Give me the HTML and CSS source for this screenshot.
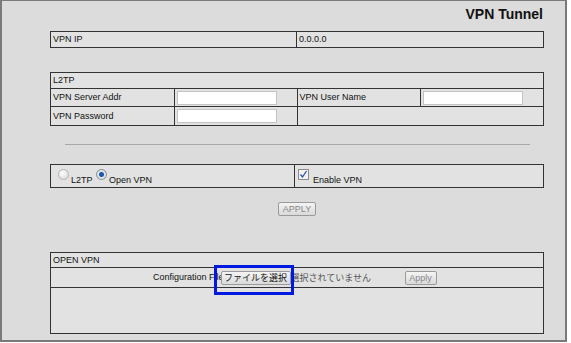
FILE: index.html
```html
<!DOCTYPE html>
<html lang="en">
<head>
  <meta charset="UTF-8" />
  <title>VPN Tunnel</title>
  <link rel="stylesheet" href="styles.css">
</head>
<body>
  <div class="frame">
    <div class="title">VPN Tunnel</div>

    <table class="grid ip">
      <tr>
        <td class="half">VPN IP</td>
        <td>0.0.0.0</td>
      </tr>
    </table>

    <table class="grid l2tp">
      <tr class="head"><td colspan="4">L2TP</td></tr>
      <tr class="r2">
        <td class="lbl">VPN Server Addr</td>
        <td class="fld"><input type="text" class="txt" /></td>
        <td class="lbl">VPN User Name</td>
        <td class="fld"><input type="text" class="txt" /></td>
      </tr>
      <tr class="r3">
        <td class="lbl">VPN Password</td>
        <td class="fld"><input type="password" class="txt" /></td>
        <td colspan="2"></td>
      </tr>
    </table>

    <div class="rule"></div>

    <table class="grid mode">
      <tr>
        <td class="mode-left">
          <span class="radio"></span><span class="opt">L2TP</span>
          <span class="radio on"></span><span class="opt">Open VPN</span>
        </td>
        <td>
          <span class="check"><svg width="9" height="9" viewBox="0 0 9 9"><path d="M1.5 4.5 L3.5 7 L7.5 1" fill="none" stroke="#2a4fb0" stroke-width="1.3"/></svg></span><span class="opt">Enable VPN</span>
        </td>
      </tr>
    </table>

    <div class="apply-row"><button class="btn" disabled>APPLY</button></div>

    <table class="grid ovpn">
      <tr class="head"><td>OPEN VPN</td></tr>
      <tr class="r2">
        <td class="file-cell">
          <span class="cfg">Configuration File</span><span class="pick"><button class="btn file">ファイルを選択</button></span><span class="none">選択されていません</span><button class="btn small">Apply</button>
        </td>
      </tr>
      <tr class="r3"><td></td></tr>
    </table>
  </div>
</body>
</html>
```

FILE: styles.css
```css
body {
  margin: 0;
  background-color: #fff;
  font-family: 'Liberation Sans', Arial, sans-serif;
  font-size: 9px;
  color: #111;
}
.frame {
  width: 563px;
  height: 339px;
  border: 2px solid #7a7a7a;
  border-top-width: 1px;
  background-color: #dcdcdc;
}
.title {
  text-align: right;
  font-size: 14px;
  font-weight: bold;
  line-height: 16px;
  padding: 5px 22px 0 0;
}
.grid {
  border-collapse: collapse;
  width: 494px;
  margin-left: 48px;
  border: 1px solid #333;
  background-color: #e2e2e2;
}
.grid td {
  border: 1px solid #333;
  padding: 0 2px;
  vertical-align: middle;
  line-height: 11px;
}
.ip {
  margin-top: 9px;
  height: 17px;
}
.half {
  width: 241px;
}
.l2tp {
  margin-top: 24px;
}
.l2tp .head td {
  height: 15px;
}
.l2tp .r2 td {
  height: 17px;
}
.l2tp .r3 td {
  height: 18px;
}
.lbl {
  width: 119px;
}
.fld {
  width: 118px;
}
.txt {
  width: 100px;
  height: 14px;
  box-sizing: border-box;
  border: 1px solid #c4c4c4;
  background-color: #fff;
  margin: 0;
  padding: 0;
  display: block;
}
.rule {
  height: 1px;
  background-color: #a8a8a8;
  margin: 18px 35px 0 63px;
}
.mode {
  margin-top: 19px;
  height: 24px;
}
.mode td {
  vertical-align: top;
  padding: 3px 3px 0;
}
.mode-left {
  width: 233px;
  padding-left: 7px !important;
}
.radio {
  display: inline-block;
  width: 9px;
  height: 9px;
  border-radius: 50%;
  border: 1px solid #b5b5b5;
  background: radial-gradient(circle at 40% 35%, #fff, #d4d4d4);
  vertical-align: top;
  margin-top: 1px;
}
.radio.on {
  border-color: #7f8f9f;
  background: radial-gradient(circle, #1860c8 0, #1a50a8 2px, #e6e6e6 3px, #cfcfcf 100%);
}
.opt {
  display: inline-block;
  margin: 7px 1px 0 2px;
  vertical-align: top;
}
.check {
  display: inline-block;
  width: 9px;
  height: 9px;
  border: 1px solid #8c8c8c;
  background-color: #f2f2f2;
  vertical-align: top;
  margin-top: 1px;
}
.check svg {
  display: block;
}
.mode .check + .opt {
  margin-left: 4px;
}
.apply-row {
  width: 494px;
  margin: 14px 0 0 48px;
  text-align: center;
}
.btn {
  font-family: 'Liberation Sans', Arial, sans-serif;
  font-size: 9px;
  color: #888;
  background: linear-gradient(#f4f4f4, #dadada);
  border: 1px solid #9a9a9a;
  border-radius: 2px;
  padding: 0 4px;
  height: 14px;
  line-height: 12px;
  margin: 0;
}
.ovpn {
  margin-top: 36px;
}
.ovpn .head td {
  height: 14px;
}
.ovpn .r2 td {
  height: 19px;
}
.ovpn .r3 td {
  height: 45px;
}
.file-cell {
  padding-left: 102px !important;
  white-space: nowrap;
}
.cfg {
  display: inline-block;
  vertical-align: middle;
}
.pick {
  position: relative;
  display: inline-block;
  vertical-align: middle;
  margin-left: -3px;
}
.pick::after {
  content: '';
  position: absolute;
  left: -7px;
  top: -6px;
  right: -3px;
  bottom: -10px;
  border: 3px solid #0018e0;
}
.file {
  font-family: 'Noto Sans CJK JP', sans-serif;
  color: #111;
  font-size: 9px;
  width: 70px;
  padding: 0;
  display: block;
}
.none {
  font-family: 'Noto Sans CJK JP', sans-serif;
  font-size: 9px;
  color: #555;
  vertical-align: middle;
  display: inline-block;
  width: 114px;
}
.small {
  vertical-align: middle;
  width: 32px;
  padding: 0;
}
```
